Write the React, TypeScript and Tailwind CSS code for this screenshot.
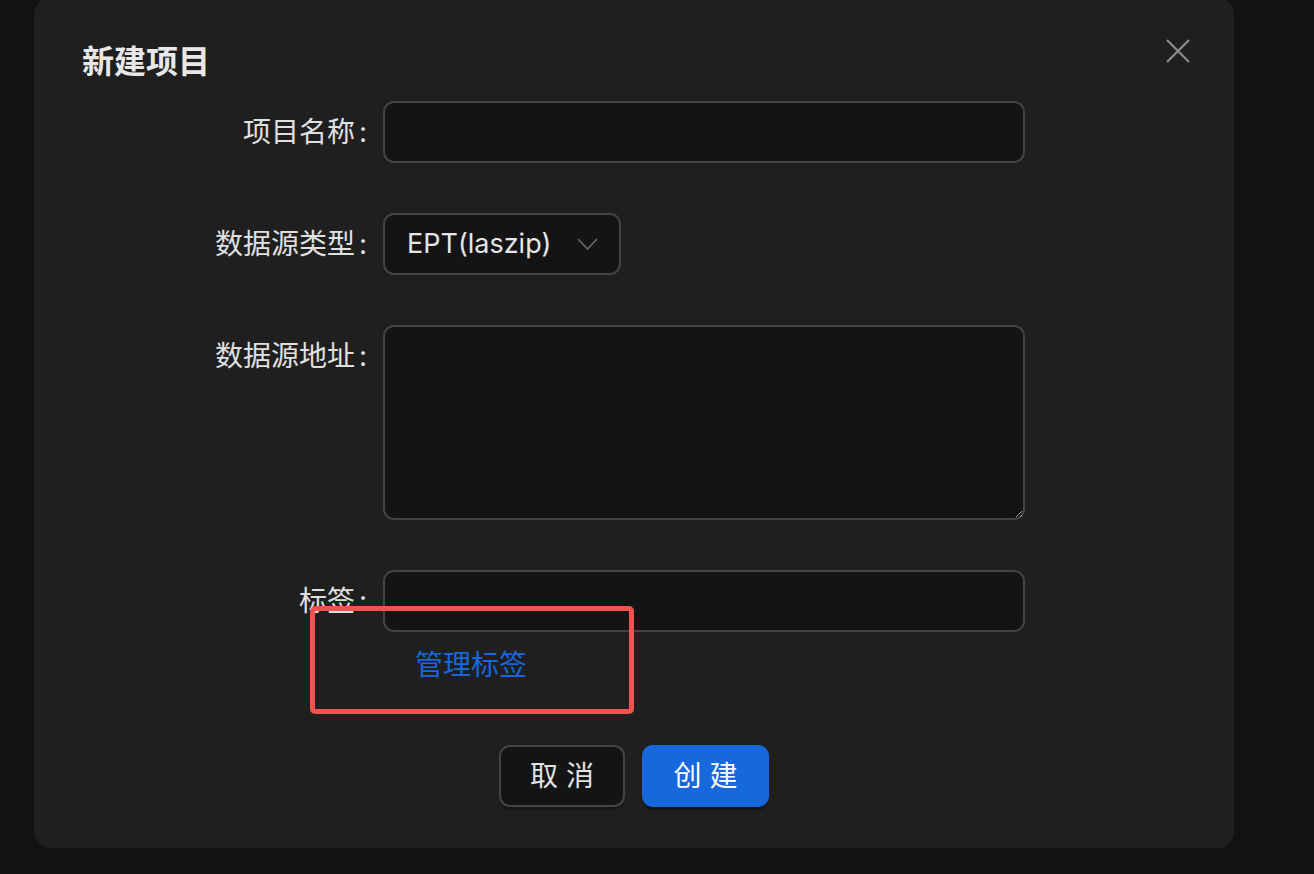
import { ReactNode } from 'react';

const font = { fontFamily: '"Inter", "Noto Sans CJK SC", sans-serif' };

function FormRow({ label, children, top = false }: { label: string; children: ReactNode; top?: boolean }) {
  return (
    <div className="flex">
      <div
        className={`w-[349px] shrink-0 flex justify-end text-[28px] text-[#e0e0e0] ${
          top ? 'items-start pt-[12px]' : 'items-center'
        }`}
      >
        <span className="leading-[38px]">{label}</span>
        <span className="leading-[38px] ml-[4px] mr-[16px]">:</span>
      </div>
      <div className="flex-1">{children}</div>
    </div>
  );
}

export default function App() {
  return (
    <div className="min-h-screen bg-[#111214] px-[34px] overflow-hidden" style={font}>
      <div className="relative -mt-[2px] w-[1200px] h-[850px] rounded-[16px] bg-[#1f1f1f] pt-[46px]">
        {/* Header */}
        <h2 className="pl-[48px] text-[32px] leading-[36px] font-bold text-[#e8e8e8]">新建项目</h2>
        <button className="absolute right-[44px] top-[41px] text-[#8c8c8c]">
          <svg width="24" height="24" viewBox="0 0 24 24" fill="none" stroke="currentColor" strokeWidth="2.2">
            <path d="M1 1 L23 23 M23 1 L1 23" />
          </svg>
        </button>

        {/* Form */}
        <div className="mt-[21px] flex flex-col gap-[50px]">
          <FormRow label="项目名称">
            <input className="w-[642px] h-[62px] rounded-[11px] border-2 border-[#444444] bg-[#141414] outline-none" />
          </FormRow>

          <FormRow label="数据源类型">
            <div className="w-[238px] h-[62px] rounded-[11px] border-2 border-[#444444] bg-[#141414] flex items-center justify-between pl-[22px] pr-[21px]">
              <span className="text-[27px] text-[#e6e6e6]">EPT(laszip)</span>
              <svg width="21" height="12" viewBox="0 0 21 12" fill="none" stroke="#6b6b6b" strokeWidth="1.6">
                <path d="M1 1 L10.5 11 L20 1" />
              </svg>
            </div>
          </FormRow>

          <FormRow label="数据源地址" top>
            <textarea className="block w-[642px] h-[195px] rounded-[11px] border-2 border-[#444444] bg-[#141414] outline-none" />
          </FormRow>

          <div>
            <FormRow label="标签">
              <input className="w-[642px] h-[62px] rounded-[11px] border-2 border-[#444444] bg-[#141414] outline-none" />
            </FormRow>
            <div className="flex">
              <div className="w-[349px] shrink-0" />
              <button className="h-[62px] pl-[32px] pt-[4px] text-[28px] text-[#1668dc]">管理标签</button>
            </div>
          </div>
        </div>

        {/* Footer */}
        <div className="mt-[51px] flex justify-center gap-[17px]">
          <button className="w-[126px] h-[62px] rounded-[11px] border-2 border-[#444444] bg-[#141414] text-[28px] text-[#e3e3e3] shadow-[0_3px_0_rgba(0,0,0,0.25)]">
            取 消
          </button>
          <button className="w-[127px] h-[62px] rounded-[11px] bg-[#1668dc] text-[28px] text-white shadow-[0_3px_0_rgba(0,0,0,0.3)]">
            创 建
          </button>
        </div>

        {/* Annotation highlight */}
        <div className="absolute left-[276px] top-[608px] w-[324px] h-[108px] rounded-[5px] border-[5px] border-[#f5524f] pointer-events-none" />
      </div>
    </div>
  );
}
